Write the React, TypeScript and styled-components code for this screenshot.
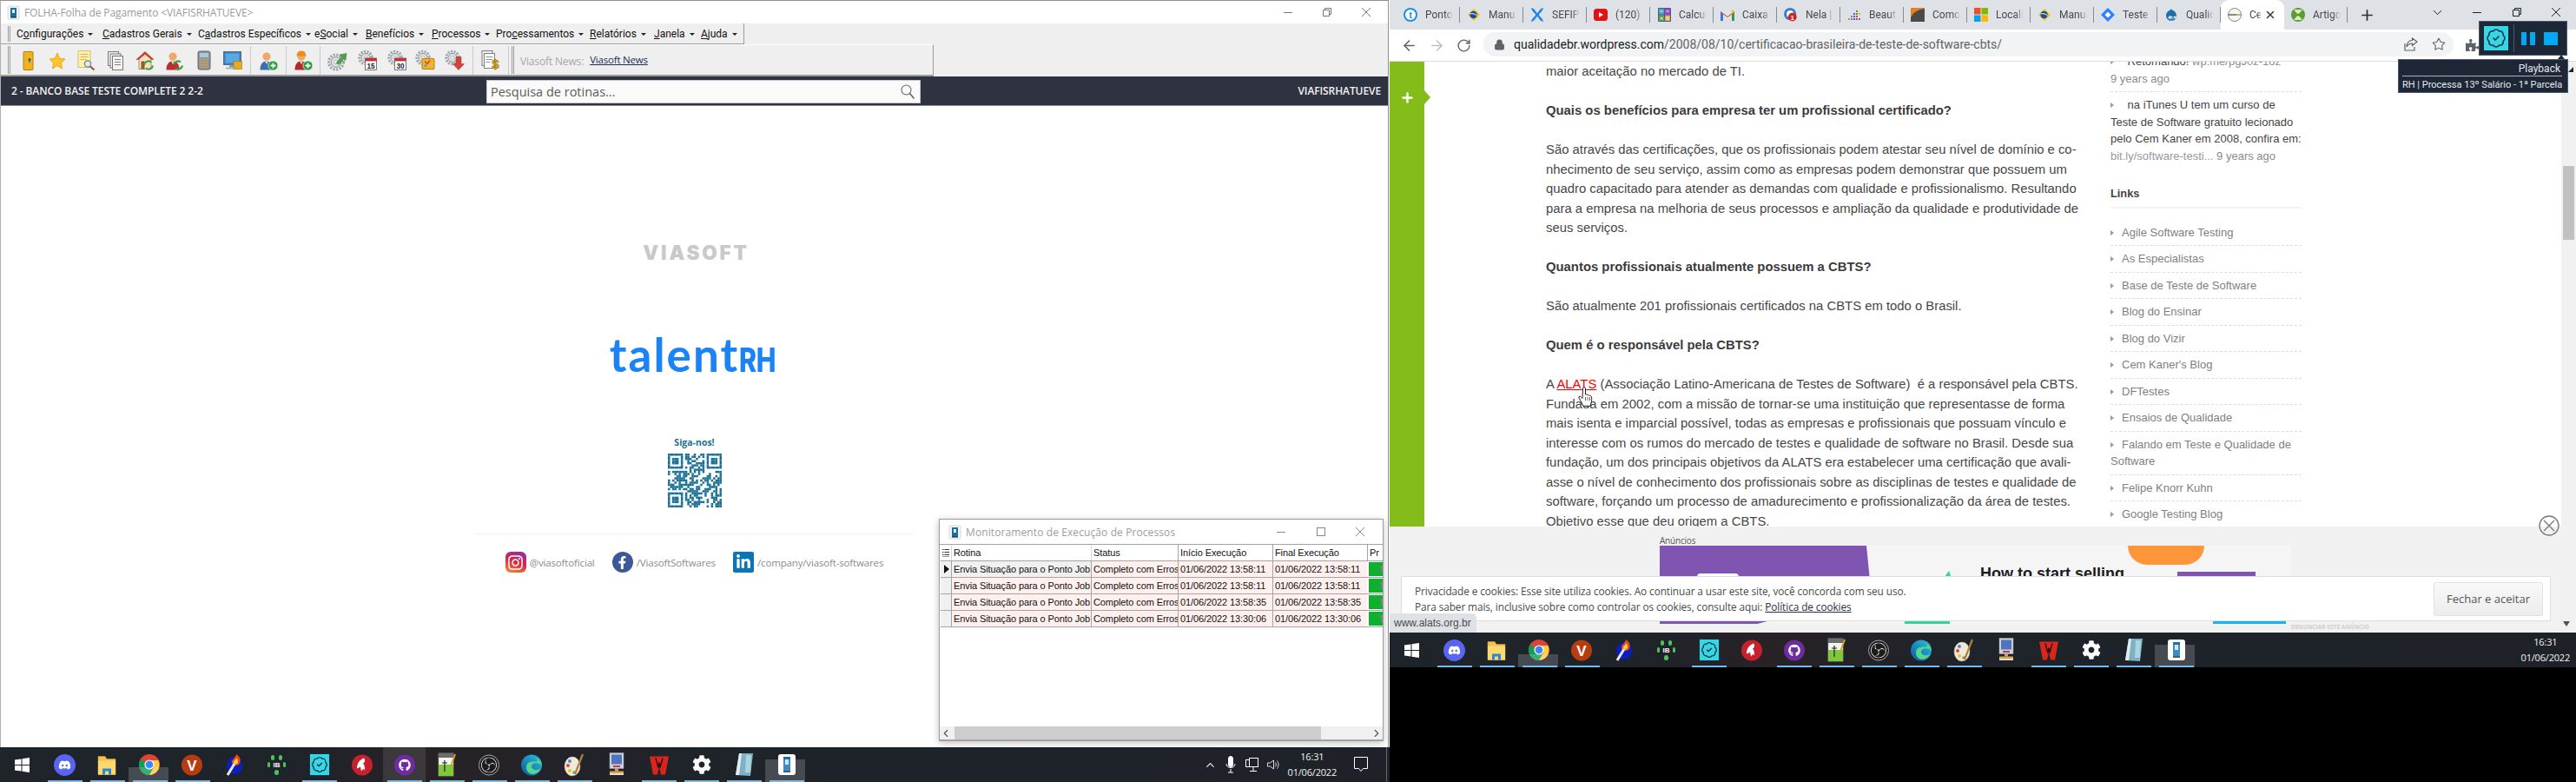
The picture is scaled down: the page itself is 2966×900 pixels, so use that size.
import React from "react";
import styled, { createGlobalStyle } from "styled-components";
import { ArrowLeft, ArrowRight, RotateCw, Lock, Star, ChevronDown, ChevronUp, ChevronLeft, ChevronRight, Plus, X, BadgeCheck } from "lucide-react";
import { FaDiscord, FaGithub, FaCog, FaPuzzlePiece, FaFacebookF, FaLinkedinIn, FaInstagram, FaDrupal } from "react-icons/fa";
import { SiObsstudio } from "react-icons/si";

const Global = createGlobalStyle`
  html, body { margin: 0; padding: 0; background: #000; }
  * { box-sizing: border-box; }
  #root { width: 2966px; height: 900px; }
`;

const UI = `"Open Sans", "Noto Sans", sans-serif`;
const NARROW = `Roboto, "Liberation Sans", sans-serif`;
const ARIAL = `"Liberation Sans", Arial, sans-serif`;

const Root = styled.div`
  position: relative; display: flex; width: 2966px; height: 900px; overflow: hidden; background: #000;
`;
const LeftDesktop = styled.div`
  position: relative; flex: 0 0 1600px; height: 900px; display: flex; flex-direction: column; background: #fff;
`;
const RightDesktop = styled.div`
  flex: 0 0 1366px; height: 900px; display: flex; flex-direction: column; background: #000;
`;

/* ---------- desktop app window ---------- */
const AppFrame = styled.div`
  flex: 1; min-height: 0; display: flex; flex-direction: column; margin-right: 1px;
  border-top: 1px solid #8e8e8e; border-left: 1px solid #b0b0b0; border-right: 1px solid #8e8e8e;
`;
const TitleBar = styled.div`
  flex: 0 0 26px; display: flex; align-items: center; background: #fff; padding-left: 7px;
`;
const TitleText = styled.span`
  font: 12px ${UI}; color: #9b9b9b; margin-left: 5px; letter-spacing: -0.1px;
`;
const CaptionButtons = styled.div`
  margin-left: auto; display: flex; margin-right: 3px;
`;
const CaptionBtn = styled.span`
  width: 45px; height: 26px; display: flex; align-items: center; justify-content: center;
`;
const MenuStrip = styled.div`
  flex: 0 0 24px; background: #efefef; display: flex;
`;
const MenuBand = styled.div`
  width: 856px; display: flex; align-items: center; border-right: 1px solid #9c9c9c; border-bottom: 1px solid #9c9c9c;
  padding-left: 8px;
`;
const Grip = styled.i`
  display: block; width: 3px; height: ${p => p.$h}px; border-left: 1px solid #9a9a9a; border-right: 1px solid #9a9a9a; margin-right: ${p => p.$m}px; flex: none;
`;
const MenuItem = styled.span`
  flex: 0 0 ${p => p.$w}px; font: 12px ${NARROW}; color: #111; white-space: nowrap;
  &::after { content: ""; display: inline-block; margin-left: 5px; vertical-align: 2px; border: 3px solid transparent; border-top: 3.5px solid #222; border-bottom: 0; }
`;
const ToolStrip = styled.div`
  flex: 0 0 37px; background: #efefef; display: flex;
`;
const ToolBand = styled.div`
  width: 1074px; display: flex; align-items: center; padding-left: 8px;
  border-top: 1px solid #fff; border-right: 1px solid #9c9c9c; border-bottom: 2px solid #9c9c9c;
`;
const ToolBtn = styled.span`
  flex: 0 0 ${p => p.$w || 33.8}px; display: flex; align-items: center; justify-content: center;
`;
const ToolSep = styled.i`
  display: block; flex: none; width: 1px; height: 33px; background: #c9c9c9; margin: 0 3px;
`;
const NewsLabel = styled.span`
  font: 12px ${UI}; color: #a7a7a7; margin-left: 7px; letter-spacing: -0.15px; margin-top: 2px;
`;
const NewsLink = styled.span`
  font: 11.5px ${UI}; color: #1b2a55; margin-left: 7px; text-decoration: underline; letter-spacing: -0.2px; margin-top: -1px;
`;
const DarkBar = styled.div`
  flex: 0 0 34px; background: #2f3240; display: flex; align-items: center; position: relative; padding: 0 8px 0 12px;
  justify-content: space-between; border-bottom: 1px solid #8e8e8e;
`;
const DarkLabel = styled.span`
  font: 600 12px ${UI}; color: #f2f2f2; letter-spacing: -0.1px;
`;
const SearchField = styled.div`
  position: absolute; left: 559px; top: 4px; width: 500px; height: 27px; background: #fafafa; border: 1px solid #c8c8c8;
  display: flex; align-items: center; justify-content: space-between; padding: 0 6px 0 4px;
  font: 14.5px ${UI}; color: #5b5b5b;
`;
const AppMain = styled.div`
  flex: 1; min-height: 0; display: flex; flex-direction: column; align-items: center; padding-top: 161px; background: #fff;
`;
const ViasoftMark = styled.div`
  font: 900 22.5px/16px Inter, sans-serif; color: #c9c9c9; letter-spacing: 2.8px; height: 16px; margin-left: 4px;
`;
const TalentMark = styled.div`
  margin-top: 87px; display: flex; align-items: baseline; color: #1a83f5; height: 44px; line-height: 44px; white-space: nowrap;
`;
const TalentWord = styled.span`
  font: 700 53px/44px Lato, sans-serif; letter-spacing: 2px;
`;
const TalentRh = styled.span`
  font: 800 38px/44px Inter, sans-serif; letter-spacing: -0.5px; transform: scaleX(0.8); transform-origin: left; width: 46px;
`;
const FollowLabel = styled.div`
  margin-top: 72px; font: 700 10.5px/14px "Open Sans", sans-serif; color: #1a6f94;
`;
const QrBox = styled.div`
  margin-top: 6px; width: 62px; height: 62px;
`;
const Divider = styled.div`
  margin: 30px 0 0 0; width: 505px; height: 1px; background: #f0f0f0;
`;
const SocialRow = styled.div`
  margin-top: 20px; display: flex; align-items: center;
`;
const SocialItem = styled.span`
  display: flex; align-items: center; gap: 4px; margin-right: ${p => p.$m}px; font: 11.5px ${UI}; color: #8b8b8b; letter-spacing: -0.15px;
`;
const InstaTile = styled.span`
  width: 24px; height: 24px; border-radius: 6px; display: flex; align-items: center; justify-content: center; color: #fff;
  background: linear-gradient(20deg, #f09433, #dc2743 50%, #8a2bb8);
  font-size: 19px;
`;
const FbTile = styled.span`
  width: 24px; height: 24px; border-radius: 50%; background: #3b5998; color: #fff; display: flex; align-items: center; justify-content: center; font-size: 15px;
`;
const LiTile = styled.span`
  width: 24px; height: 24px; border-radius: 2px; background: #0a76b4; color: #fff; display: flex; align-items: center; justify-content: center; font-size: 18px;
`;

/* ---------- floating monitor window ---------- */
const MonitorWindow = styled.div`
  position: absolute; left: 1081px; top: 597px; width: 512px; height: 256px; background: #fff;
  border: 1px solid #9d9d9d; box-shadow: 0 2px 8px rgba(0,0,0,.25);
  display: flex; flex-direction: column; overflow: hidden;
`;
const MonitorTitle = styled.div`
  flex: 0 0 29px; display: flex; align-items: center; padding-left: 10px; border-bottom: 1px solid #a3a3a3;
`;
const MonitorTitleText = styled.span`
  font: 12px ${UI}; color: #9d9d9d; margin-left: 5px; letter-spacing: 0.1px;
`;
const MonitorCaption = styled.span`
  width: 45.5px; height: 28px; display: flex; align-items: center; justify-content: center;
`;
const GridArea = styled.div`
  flex: 1; min-height: 0; margin-left: 1px; overflow: hidden; display: flex; flex-direction: column;
`;
const GridRow = styled.div`
  flex: 0 0 ${p => p.$h}px; display: grid; grid-template-columns: 12px 161px 100px 109px 109px 18px;
  border-bottom: 1px solid #a5a5a5;
`;
const GridCell = styled.span`
  font: 11px/18px ${ARIAL}; color: #111; padding-left: 2px; overflow: hidden; white-space: nowrap; letter-spacing: -0.1px;
  background: ${p => p.$bg}; border-left: 1px solid ${p => (p.$soft ? "#d8d8d8" : "#a5a5a5")};
`;
const GridIndicator = styled.span`
  display: flex; align-items: center; justify-content: center; background: ${p => p.$bg};
`;
const PrCell = styled.span`
  margin: 1px 0 1px 2px; background: #0fb02d; color: #e64bd0; font: 11.5px/15px ${UI}; padding-left: 11px; overflow: hidden;
`;
const HScroll = styled.div`
  flex: 0 0 16px; display: flex; align-items: center; background: #f0f0f0; border-bottom: 1px solid #a8a8b0; color: #555;
`;
const HThumb = styled.div`
  flex: 0 0 422px; height: 15px; background: #cdcdcd; margin: 0 auto 0 3px;
`;

/* ---------- taskbar ---------- */
const TaskbarWrap = styled.div`
  flex: 0 0 40px; height: 40px; display: flex; align-items: stretch;
  background: linear-gradient(90deg, #1f232a 0%, #1f232a 20%, #272226 32%, #1f232a 48%, #1e2228 100%);
`;
const StartCell = styled.span`
  flex: 0 0 50px; display: flex; align-items: center; justify-content: center;
`;
const TaskCell = styled.span`
  position: relative; flex: 0 0 48.9px; display: flex; align-items: center; justify-content: center;
  ${p => p.$full && `background: rgba(255,255,255,.1);`}
  ${p => p.$run && `
    &::after { content: ""; position: absolute; left: 5px; right: 4px; bottom: 0; height: 2px; background: #76b9ed; }
  `}
  ${p => p.$ghost && `
    &::before { content: ""; position: absolute; left: 0; right: 3px; bottom: 0; height: ${p.$ghost}px; background: rgba(255,255,255,.18); }
  `}
`;
const Tray = styled.div`
  margin-left: auto; display: flex; align-items: center; gap: ${p => p.$gap}px; color: #fff; padding-right: ${p => p.$pr}px;
`;
const Clock = styled.div`
  font: 11px/18px ${UI}; color: #f2f2f2; text-align: center; letter-spacing: -0.2px;
`;
const NotifySlot = styled.span`
  display: flex; margin-left: 11px;
`;
const DesktopEdge = styled.i`
  display: block; width: 1px; height: 40px; background: #666; margin-left: 12px; margin-right: 3px;
`;

/* ---------- chrome ---------- */
const ChromeWindow = styled.div`
  flex: 0 0 728px; height: 728px; display: flex; flex-direction: column; background: #fff; position: relative;
`;
const TabStrip = styled.div`
  flex: 0 0 34px; background: #dee1e6; display: flex; align-items: stretch; padding-left: 8px;
`;
const Tab = styled.div`
  position: relative; flex: 0 0 73px; display: flex; align-items: center; padding-left: 8px; overflow: hidden;
  ${p => p.$active
    ? `background: #fff; border-radius: 9px 9px 0 0;`
    : p.$sep ? `&::after { content: ""; position: absolute; right: 0; top: 8px; bottom: 8px; width: 1px; background: #878a8e; }` : ``}
`;
const Favicon = styled.span`
  flex: 0 0 16px; width: 16px; height: 16px; display: flex; align-items: center; justify-content: center;
`;
const TabTitle = styled.span`
  margin-left: 9px; width: ${p => p.$w}px; font: 12px Roboto, sans-serif; color: #45484d; white-space: nowrap; overflow: hidden;
  -webkit-mask-image: linear-gradient(90deg, #000 72%, transparent 100%);
  mask-image: linear-gradient(90deg, #000 72%, transparent 100%);
`;
const TabClose = styled.span`
  display: flex; color: #3c3f44; margin-left: 3px;
`;
const NewTab = styled.span`
  display: flex; align-items: center; justify-content: center; width: 44px; color: #2f3135;
`;
const ChromeCaption = styled.div`
  margin-left: auto; display: flex; align-items: flex-start; color: #222;
`;
const ChromeCapBtn = styled.span`
  width: 45.5px; height: 28px; display: flex; align-items: center; justify-content: center;
`;
const ChromeToolbar = styled.div`
  flex: 0 0 37px; display: flex; align-items: center; background: #fff; border-bottom: 1px solid #dcdcdc; padding-left: 12px; gap: 0;
`;
const NavBtn = styled.span`
  flex: 0 0 32px; display: flex; color: ${p => p.$c}; padding-left: 1px;
`;
const Omnibox = styled.div`
  width: 1117px; height: 28px; border-radius: 14px; background: #f1f3f4; display: flex; align-items: center; padding-left: 12px; margin-bottom: 2px;
`;
const UrlText = styled.span`
  margin-left: 10px; font: 14px Roboto, sans-serif; color: #5f6368;
`;
const UrlHost = styled.span`
  color: #202124;
`;
const OmniRight = styled.div`
  margin-left: auto; display: flex; align-items: center; gap: 16px; padding-right: 9px; color: #5f6368;
`;
const PuzzleSlot = styled.span`
  margin-left: 14px; display: flex; color: #5f6368;
`;
const Viewport = styled.div`
  flex: 1; min-height: 0; position: relative; display: flex; flex-direction: column; overflow: hidden;
`;
const PageBody = styled.div`
  flex: 0 0 535px; height: 535px; display: flex; overflow: hidden; background: #fff;
`;
const GreenRail = styled.div`
  position: relative; flex: 0 0 40px; background: #84bd19; display: block; color: #fff;
`;
const RailTab = styled.span`
  position: absolute; left: 0; top: 33px; width: 47px; height: 17px; display: flex; align-items: center; padding-left: 12px;
  &::after { content: ""; position: absolute; left: 40px; top: 0; border-left: 7px solid #84bd19; border-top: 8.5px solid transparent; border-bottom: 8.5px solid transparent; }
`;
const Article = styled.article`
  flex: 0 0 650px; margin-left: 140px; font: 14.85px/22.5px ${ARIAL}; color: #474747; white-space: nowrap;
`;
const Para = styled.p`
  margin: 0 0 22.5px;
  a { color: #f00; text-decoration: underline; }
`;
const Heading = styled.p`
  margin: 0 0 22.5px; font-weight: 700; color: #3b3b3b;
`;
const Side = styled.aside`
  flex: 0 0 220px; margin-top: -10px; font: 13px/19.5px ${ARIAL}; color: #444; letter-spacing: 0;
`;
const SideTweet = styled.div`
  padding: 0 0 5px; border-bottom: 1px dashed #ddd;
  & + & { padding-top: 5px; border-bottom: 0; }
`;
const Bullet = styled.i`
  display: inline-block; width: 0; height: 0; vertical-align: 1px; margin-right: ${p => p.$m}px;
  border-left: 4px solid #999; border-top: 3.5px solid transparent; border-bottom: 3.5px solid transparent;
`;
const Muted = styled.span`
  color: ${p => p.$c || "#8c8c8c"};
`;
const SideHeading = styled.div`
  margin-top: 19px; padding-bottom: 5px; font-weight: 700; font-size: 12.8px; color: #444; border-bottom: 2px solid #f3f3f3;
`;
const LinkList = styled.ul`
  list-style: none; margin: 13px 0 0; padding: 0; color: #7f7f7f;
`;
const LinkItem = styled.li`
  padding: 5px 0; border-bottom: 1px dashed #ddd; white-space: pre;
`;
const ScrollTrack = styled.div`
  margin-left: auto; flex: 0 0 17px; background: #f1f1f1; padding-top: 120px;
`;
const ScrollThumb = styled.div`
  width: 13px; height: 85px; margin-left: 2px; background: #c1c1c1;
`;
const AdFooter = styled.div`
  flex: 1; min-height: 0; position: relative; background: #f1f1f1; padding: 10px 0 0 311px;
`;
const AdLabel = styled.div`
  font: 10px/12px ${UI}; color: #555; letter-spacing: -0.2px;
`;
const AdBox = styled.div`
  position: relative; width: 727px; height: 90px; background: #f5f5f5; overflow: hidden;
`;
const AdPurple = styled.i`
  position: absolute; left: ${p => p.$l}px; top: ${p => p.$t}px; width: ${p => p.$w}px; height: ${p => p.$h}px; background: ${p => p.$c};
  ${p => p.$r && `border-radius: ${p.$r};`}
  ${p => p.$clip && `clip-path: ${p.$clip};`}
`;
const AdHeadline = styled.div`
  position: absolute; left: 369px; top: 21px; font: 700 18px/22px ${ARIAL}; color: #1c1c1c;
`;
const AdReport = styled.div`
  position: absolute; left: 1038px; top: 111px; width: 90px; font: 700 6.6px/10px ${UI}; color: #cfcfcf; white-space: nowrap;
`;
const DownTri = styled.i`
  position: absolute; right: 7px; top: 109px; border: 4px solid transparent; border-top: 6px solid #505050; border-bottom: 0;
`;
const CookieBar = styled.div`
  position: absolute; left: 13px; top: 592px; width: 1324px; height: 52px; background: #fff; border: 1px solid #dedede;
  display: flex; align-items: center; justify-content: space-between; padding: 0 8px 0 15px;
`;
const CookieText = styled.div`
  font: 11.8px/18px ${UI}; color: #4a4a4a; letter-spacing: -0.08px;
  a { color: #2a2f45; text-decoration: underline; }
`;
const CookieBtn = styled.span`
  width: 126px; height: 39px; display: flex; align-items: center; justify-content: center; background: linear-gradient(#f9f9f9, #ececec);
  border: 1px solid #e2e2e2; font: 13px ${UI}; color: #555; border-radius: 2px;
`;
const StatusBubble = styled.div`
  position: absolute; left: 0; bottom: 0; width: 100px; height: 22px; padding-left: 5px; background: #dee1e6; border-top-right-radius: 5px;
  font: 12px/22px ${ARIAL}; color: #4a4a4a;
`;
const CloseCircle = styled.span`
  position: absolute; left: 1323px; top: 522px; display: flex;
`;
const HandCursor = styled.span`
  position: absolute; left: 217px; top: 374px; display: flex;
`;

/* ---------- playback overlay ---------- */
const PlaybackBar = styled.div`
  position: absolute; left: 2854px; top: 24px; width: 102px; height: 40px; background: #1e2736; border: 1px solid #4b5a72;
  display: flex; align-items: center; padding-left: 5px;
`;
const BadgeTile = styled.span`
  flex: 0 0 28px; height: 28px; background: #36d6e4; color: #14303c; display: flex; align-items: center; justify-content: center;
`;
const BarDivider = styled.i`
  flex: none; width: 1px; height: 32px; background: #4b5a72; margin: 0 8px 0 6px;
`;
const PauseIcon = styled.span`
  flex: none; width: 16px; height: 15px; display: flex; justify-content: space-between;
  &::before, &::after { content: ""; width: 6px; background: #00a8f5; }
`;
const StopIcon = styled.i`
  flex: none; width: 16px; height: 15px; background: #00a8f5; margin-left: 10px;
`;
const PlaybackTip = styled.div`
  position: absolute; left: 2761px; top: 68px; width: 196px; height: 39px; background: #1e2736; border: 1px solid #4b5a72; color: #e4e9ef;
  font: 11px/17px ${NARROW}; text-align: right; padding: 2px 6px 0 4px; white-space: nowrap;
  &::before { content: ""; position: absolute; right: 3px; top: -6px; border: 4px solid transparent; border-bottom: 5px solid #1e2736; border-top: 0; }
`;
const TipTitle = styled.div`
  border-bottom: 1px solid #aab2bc; padding-right: 2px; height: 17px; margin-bottom: 1px; font-size: 12px;
`;
const MouseTip = styled.i`
  position: absolute; left: 2957px; top: 77px; border-bottom: 6px solid #222; border-left: 6px solid transparent;
`;

/* ---------- drawings ---------- */
const Cap = ({ kind, c = "#777", s = 1 }: { kind: string; c?: string; s?: number }) => (
  <svg width="12" height="12" viewBox="0 0 12 12" fill="none" stroke={c} strokeWidth={s}>
    {kind === "min" && <path d="M1 6.5h10" />}
    {kind === "max" && <rect x="1.5" y="1.5" width="9" height="9" />}
    {kind === "res" && <path d="M1.5 3.5h7v7h-7zM3.5 3.5v-2h7v7h-2" />}
    {kind === "close" && <path d="M1 1l10 10M11 1L1 11" />}
  </svg>
);

const AppGlyph = () => (
  <svg width="15" height="17" viewBox="0 0 15 17">
    <rect x="1" y="1" width="13" height="15" rx="1" fill="#f4f4f4" stroke="#d8d8d8" />
    <rect x="4" y="3" width="7" height="10" fill="#1a6ea8" />
    <rect x="6" y="5" width="3" height="4" fill="#dff" />
    <rect x="4" y="13" width="7" height="1.6" fill="#14466e" />
  </svg>
);

const ToolGear = ({ x, y, r }: { x: number; y: number; r: number }) => (
  <g>
    <circle cx={x} cy={y} r={r * 1.05} fill="none" stroke="#a0a6aa" strokeWidth={r * 0.42} strokeDasharray="2.2 1.4" />
    <circle cx={x} cy={y} r={r * 0.72} fill="#dfe2e4" stroke="#7f858a" strokeWidth="0.9" />
    <circle cx={x} cy={y} r={r * 0.28} fill="#fff" stroke="#8a9095" strokeWidth="0.6" />
  </g>
);
const Person = ({ body, head = "#f0a868" }: { body: string; head?: string }) => (
  <g>
    <circle cx="10" cy="7.5" r="4.6" fill={head} />
    <path d="M2.5 23c0-7 3-10 7.5-10s7.5 3 7.5 10z" fill={body} />
    <path d="M8.5 13.5l1.5 3 1.5-3z" fill="#f4f4f4" />
  </g>
);
const GreenPlus = () => (
  <g>
    <circle cx="17.5" cy="18" r="5.5" fill="#2e9a3e" stroke="#eaf5ea" strokeWidth="0.8" />
    <path d="M17.5 15v6M14.5 18h6" stroke="#fff" strokeWidth="1.8" />
  </g>
);
const Sync = () => (
  <g fill="none" stroke="#3da33f" strokeWidth="2.2">
    <path d="M11 17a5 5 0 0 1 8-3" />
    <path d="M21 18a5 5 0 0 1-8 3" />
  </g>
);
const CalPad = ({ n }: { n: string }) => (
  <g>
    <rect x="9.5" y="9.5" width="13" height="13.5" fill="#fff" stroke="#555" strokeWidth="0.8" />
    <rect x="9.5" y="9.5" width="13" height="3.4" fill="#c9302c" />
    <text x="16" y="21.5" fontSize="8.2" fontWeight="700" fontFamily="Liberation Sans" textAnchor="middle" fill="#222">{n}</text>
  </g>
);

const toolDrawings: Record<string, React.ReactNode> = {
  door: <g><rect x="7" y="2" width="11" height="21" rx="1" fill="#f1b21d" stroke="#b67a10" /><circle cx="14" cy="11" r="1.5" fill="#245a9c" /><rect x="13.4" y="11" width="1.2" height="3.5" fill="#245a9c" /></g>,
  star: <polygon points="12,3.5 14.8,9.8 21,10.5 16.4,15 17.6,21.5 12,18.2 6.4,21.5 7.6,15 3,10.5 9.2,9.8" fill="#ffc42a" stroke="#e39a12" strokeWidth="0.8" />,
  search: <g><rect x="3" y="1" width="14" height="19" fill="#fdf1ad" stroke="#d7c26a" /><path d="M5.5 5h9M5.5 8h9M5.5 11h7" stroke="#cdb65d" /><circle cx="14" cy="16" r="3.6" fill="#dfeaf2" stroke="#707a82" strokeWidth="1.2" /><path d="M17 19l4.5 4" stroke="#7b5a2c" strokeWidth="2" /></g>,
  docs: <g fill="#f2f2f2" stroke="#777"><rect x="3.5" y="2" width="12" height="16" /><rect x="6" y="4.5" width="12" height="16" /><rect x="8.5" y="7" width="12" height="16" /><path d="M11 11h7M11 14h7M11 17h7" strokeWidth="0.9" /></g>,
  house: <g><path d="M12 2L2 11h3v11h14V11h3z" fill="#f4e0bc" stroke="#8c6a3a" strokeWidth="0.7" /><path d="M12 2L2 11h3l7-6 7 6h3z" fill="#c93a30" /><rect x="7.5" y="13" width="4" height="9" fill="#8a5c30" /><Sync /></g>,
  personSync: <g><Person body="#bb2f2f" /><Sync /></g>,
  calc: <g><rect x="5" y="1.5" width="14" height="21" rx="2" fill="#8d969c" stroke="#5e666c" /><rect x="7" y="3.5" width="10" height="5" fill="#a7c8dc" /><path d="M7.5 11h2.2M11 11h2.2M14.3 11h2.2M7.5 14h2.2M11 14h2.2M14.3 14h2.2M7.5 17h2.2M11 17h2.2M14.3 17h2.2M7.5 20h2.2M11 20h2.2M14.3 20h2.2" stroke="#e7a33a" strokeWidth="1.7" /></g>,
  monitor: <g><rect x="1.5" y="2" width="20" height="15" fill="#3a7fc2" stroke="#5d6a78" /><rect x="3.5" y="4" width="16" height="11" fill="#5aa8e2" /><rect x="8" y="17" width="7" height="3" fill="#8d98a3" /><rect x="4" y="20" width="15" height="2" fill="#aab3bb" /><rect x="13" y="13" width="9.5" height="9" fill="#e8a922" stroke="#a4730f" strokeWidth="0.6" /></g>,
  personAdd: <g><Person body="#3a6fb0" /><GreenPlus /></g>,
  worker: <g><Person body="#b02c2c" /><path d="M4.5 7c0-4 2.5-6 5.5-6s5.5 2 5.5 6z" fill="#ee8a1f" /><GreenPlus /></g>,
  gearArrow: <g><ToolGear x={10} y={14} r={8} /><path d="M10 15l6-7-2-2.5 8-1.5-1 8-2.2-1.8-5.5 6.5z" fill="#4ea24a" stroke="#2c7a2c" strokeWidth="0.5" /></g>,
  gear15: <g><ToolGear x={10} y={9} r={7} /><CalPad n="15" /></g>,
  gear30: <g><ToolGear x={10} y={9} r={7} /><CalPad n="30" /></g>,
  gearBag: <g><ToolGear x={9} y={9} r={7} /><rect x="8" y="10" width="14" height="12" rx="1" fill="#f0b52c" stroke="#b67a10" /><path d="M11 13l3 3 3-4" stroke="#d23a3a" strokeWidth="1.4" fill="none" /><circle cx="12" cy="18" r="1.5" fill="#4aa0d8" /></g>,
  gearDown: <g><ToolGear x={9} y={9} r={7} /><path d="M13 8h6v8h3.5l-6.5 7-6.5-7H13z" fill="#d8413a" stroke="#9c2622" strokeWidth="0.5" /></g>,
  docMoney: <g><rect x="2" y="1" width="12" height="17" fill="#f0f0f0" stroke="#808080" /><rect x="4.5" y="4" width="12" height="17" fill="#fafafa" stroke="#808080" /><path d="M6.5 8h8M6.5 11h8M6.5 14h5" stroke="#999" /><text x="17.5" y="21" fontSize="15" fontWeight="700" fontFamily="Liberation Sans" textAnchor="middle" fill="#e0a80e" stroke="#8d6a08" strokeWidth="0.5">$</text></g>,
};
const ToolIcon = ({ name }: { name: string }) => (
  <svg width="24" height="25" viewBox="0 0 24 24">{toolDrawings[name]}</svg>
);

const ChromeBall = ({ size = 24 }: { size?: number }) => (
  <svg width={size} height={size} viewBox="0 0 24 24">
    <circle cx="12" cy="12" r="12" fill="#db4437" />
    <path d="M12 12L1.6 6A12 12 0 0 0 12 24l5.2-9z" fill="#0f9d58" />
    <path d="M12 7h10.4A12 12 0 0 1 12 24l5-9z" fill="#ffcd40" />
    <circle cx="12" cy="12" r="5.6" fill="#fff" />
    <circle cx="12" cy="12" r="4.4" fill="#4285f4" />
  </svg>
);

const BadgeGear = ({ size = 24, c = "#173344" }: { size?: number; c?: string }) => <BadgeCheck size={size} color={c} strokeWidth={1.6} />;

const taskIcons: Record<string, React.ReactNode> = {
  discord: <svg width="25" height="25" viewBox="0 0 24 24"><circle cx="12" cy="12" r="12" fill="#5865f2" /><g transform="translate(5 5) scale(0.583)"><FaDiscord size={24} color="#fff" /></g></svg>,
  folder: <svg width="24" height="25" viewBox="0 0 24 24"><path d="M2 2h8l2 3h10v18H2z" fill="#f3c24a" stroke="#cc9a2c" strokeWidth="0.6" /><rect x="2" y="7" width="20" height="16" fill="#fbd872" /><path d="M7 23v-7h10v7" fill="#2d88cf" /><rect x="10" y="19" width="4" height="4" fill="#fbd872" /></svg>,
  chrome: <ChromeBall size={24} />,
  vivaldi: <svg width="24" height="25" viewBox="0 0 24 24"><circle cx="12" cy="12" r="12" fill="#b83c12" /><text x="12" y="18" fontSize="17" fontWeight="700" fontFamily="Liberation Sans" textAnchor="middle" fill="#fff">V</text></svg>,
  torch: <svg width="24" height="28" viewBox="0 0 24 28"><ellipse cx="12" cy="15" rx="9" ry="10" fill="#0b1fc0" /><path d="M14 2c5 3 6 8 3 12-3 2-7 1-8-2-1-4 4-5 5-10z" fill="#e6491e" /><path d="M14 6c2 2 3 5 1 7-2 1-4 0-4-2 0-2 3-2 3-5z" fill="#ffd336" /><path d="M12 13L4 26" stroke="#e9e9e9" strokeWidth="3" /></svg>,
  dots: <svg width="24" height="26" viewBox="0 0 24 26"><g fill="#4bc45a"><rect x="5" y="2" width="4" height="6" rx="2" /><rect x="14" y="2" width="4" height="6" rx="2" /><rect x="9" y="19" width="5" height="6" rx="2.5" /><rect x="1" y="10" width="3" height="6" rx="1.5" /><rect x="19" y="10" width="3" height="6" rx="1.5" /></g><text x="11.5" y="16" fontSize="8" fontWeight="700" fontFamily="Liberation Sans" textAnchor="middle" fill="#fff">IB</text></svg>,
  wing: <svg width="24" height="25" viewBox="0 0 24 24"><circle cx="12" cy="12" r="12" fill="#c5222e" /><path d="M14 4c-5 2-8 6-8 12 2-1 3-1 4-2l1 5c1-1 2-2 2-3l2 2c0-3 0-6-2-8 2-1 3-3 1-6z" fill="#fff" /></svg>,
  github: <svg width="24" height="25" viewBox="0 0 24 24"><circle cx="12" cy="12" r="12" fill="#6e2c9e" /><g transform="translate(5 5) scale(0.583)"><FaGithub size={24} color="#fff" /></g></svg>,
  note: <svg width="24" height="28" viewBox="0 0 24 28"><rect x="3" y="1" width="17" height="26" fill="#f5f5f0" stroke="#aaa" strokeWidth="0.6" /><rect x="3" y="1" width="17" height="5" fill="#6c6c6c" /><rect x="3" y="14" width="17" height="13" fill="#7ec83a" /><path d="M10 9v13M13 12h-6" stroke="#222" strokeWidth="1.2" /><path d="M22 2l-5 14" stroke="#d8a324" strokeWidth="2" /></svg>,
  obs: <svg width="24" height="25" viewBox="0 0 24 24"><circle cx="12" cy="12" r="11.5" fill="#1c1c1c" stroke="#aaa" /><g transform="translate(3 3) scale(0.75)"><SiObsstudio size={24} color="#ececec" /></g></svg>,
  edge: <svg width="24" height="25" viewBox="0 0 24 24"><defs><linearGradient id="edgeG" x1="0" y1="1" x2="1" y2="0"><stop offset="0" stopColor="#0c59a4" /><stop offset="1" stopColor="#2cc0d8" /></linearGradient></defs><circle cx="12" cy="12" r="12" fill="url(#edgeG)" /><path d="M23 15c-2 3-7 4-10 1-2-2-1-5 2-6 3-1 8 0 9 3-1-7-8-12-15-10 6-1 10 1 10 4 0 2-6 0-10 2C5 11 5 18 9 21c4 3 11 1 14-6z" fill="#58d68e" /></svg>,
  palette: <svg width="24" height="27" viewBox="0 0 24 27"><ellipse cx="10" cy="15" rx="9" ry="11" fill="#f0e8d8" stroke="#b8b0a0" strokeWidth="0.5" /><circle cx="7" cy="9" r="2" fill="#3a8fd8" /><circle cx="5" cy="14" r="2" fill="#e8483a" /><circle cx="7" cy="20" r="2" fill="#f2c12e" /><circle cx="12" cy="22" r="1.7" fill="#50b050" /><path d="M22 1l-9 23" stroke="#b08040" strokeWidth="2.2" /></svg>,
  pc: <svg width="24" height="28" viewBox="0 0 24 28"><rect x="4" y="0.5" width="16" height="18" fill="#cfd3d8" stroke="#9aa0a6" strokeWidth="0.5" /><rect x="6" y="2.5" width="12" height="11" fill="#4e74c0" /><rect x="8" y="15" width="8" height="2" fill="#c04040" /><rect x="10" y="18.5" width="4" height="3" fill="#aaa" /><rect x="4" y="21.5" width="16" height="2.5" fill="#e8a636" /><rect x="4" y="24" width="16" height="2" fill="#ddd" /></svg>,
  wps: <svg width="24" height="25" viewBox="0 0 24 24"><path d="M1 2h22l-4 21h-5l-2-9-2 9H5z" fill="#d8261c" /><path d="M8 4l3 11 1-6 1 6 3-11" fill="none" stroke="#2a0e0e" strokeWidth="1.4" /></svg>,
  gear: <FaCog size={22} color="#fff" />,
  pad: <svg width="24" height="28" viewBox="0 0 24 28"><path d="M6 1h16l-3 26-17-1z" fill="#7eb2c2" /><path d="M6 1l-4 25 4 0 3-25z" fill="#e4eef2" /><path d="M14 3h6l-1 20h-6z" fill="#a9d4e0" /></svg>,
  app: <svg width="22" height="26" viewBox="0 0 22 26"><rect x="1" y="1" width="20" height="24" rx="3" fill="#fff" /><rect x="7" y="4" width="8" height="16" fill="#1c6fb0" /><rect x="9" y="7" width="4" height="6" fill="#bde4f6" /><rect x="7" y="20" width="8" height="2" fill="#103e68" /></svg>,
};

const StartIcon = () => (
  <svg width="17" height="17" viewBox="0 0 17 17" fill="#fff">
    <polygon points="0,2.5 7.5,1.4 7.5,8 0,8" />
    <polygon points="8.5,1.2 17,0 17,8 8.5,8" />
    <polygon points="0,9 7.5,9 7.5,15.6 0,14.5" />
    <polygon points="8.5,9 17,9 17,17 8.5,15.8" />
  </svg>
);

const taskOrder = ["discord", "folder", "chrome", "vivaldi", "torch", "dots", "badge", "wing", "github", "note", "obs", "edge", "palette", "pc", "wps", "gear", "pad", "app"];
const running = new Set(["discord", "folder", "chrome", "vivaldi", "badge", "github", "note", "obs", "edge", "palette", "wps", "gear", "pad", "app"]);

const BadgeTileSmall = styled.span`
  width: 24px; height: 26px; background: #36d6e4; border: 1px solid #14303c; display: flex; align-items: center; justify-content: center;
`;
const BadgeTaskIcon = () => (
  <BadgeTileSmall><BadgeGear size={20} /></BadgeTileSmall>
);

const Taskbar = ({ activeFull, appGhost, chromeGhost, children }: { activeFull: boolean; appGhost: number; chromeGhost: number; children: React.ReactNode }) => (
  <TaskbarWrap>
    <StartCell><StartIcon /></StartCell>
    {taskOrder.map(k => (
      <TaskCell
        key={k}
        $run={running.has(k)}
        $full={activeFull && k === "github"}
        $ghost={k === "app" ? appGhost : k === "chrome" ? chromeGhost : 0}
      >
        {k === "badge" ? <BadgeTaskIcon /> : taskIcons[k]}
      </TaskCell>
    ))}
    {children}
  </TaskbarWrap>
);

const TrayIcons = () => (
  <>
    <ChevronUp size={15} color="#eee" />
    <svg width="14" height="20" viewBox="0 0 14 20" fill="none" stroke="#fff"><rect x="4.5" y="0.5" width="5" height="12" rx="2.5" fill="#fff" /><path d="M2 9c0 6 10 6 10 0M7 15v4M4 19h6" /></svg>
    <svg width="16" height="18" viewBox="0 0 16 18" fill="none" stroke="#fff"><rect x="5.5" y="1.5" width="10" height="10" /><rect x="1.5" y="3.5" width="4" height="8" /><path d="M10 11.5v5M6 16.5h8" /></svg>
    <svg width="16" height="16" viewBox="0 0 16 16" fill="none" stroke="#ddd"><path d="M1.5 6v4h3l4 3V3l-4 3zM10.5 5.5c1 1.500 1 3.500 0 5M12.500 3.500c2 3 2 6 0 9" /></svg>
  </>
);

const QRCode = () => {
  const n = 25;
  const cells: React.ReactNode[] = [];
  const finder = (x: number, y: number) => {
    const inR = (ox: number, oy: number) => x >= ox && x < ox + 7 && y >= oy && y < oy + 7;
    for (const [ox, oy] of [[0, 0], [18, 0], [0, 18]]) {
      if (inR(ox, oy)) {
        const a = x - ox, b = y - oy;
        return a === 0 || a === 6 || b === 0 || b === 6 || (a >= 2 && a <= 4 && b >= 2 && b <= 4) ? 1 : 0;
      }
      if (x >= ox - 1 && x <= ox + 7 && y >= oy - 1 && y <= oy + 7) return 0;
    }
    return -1;
  };
  for (let y = 0; y < n; y++) {
    for (let x = 0; x < n; x++) {
      const f = finder(x, y);
      const v = f >= 0 ? f : (Math.sin(x * 12.9898 + y * 78.233) * 43758.5453) % 1;
      const on = f >= 0 ? f === 1 : Math.abs(v as number) > 0.42;
      if (on) cells.push(<rect key={`${x}-${y}`} x={x} y={y} width="1.02" height="1.02" />);
    }
  }
  return <svg width="62" height="62" viewBox="0 0 25 25" fill="#1a6f94" preserveAspectRatio="none">{cells}</svg>;
};

const tabIcons: Record<string, React.ReactNode> = {
  t: <svg width="16" height="16" viewBox="0 0 16 16"><circle cx="8" cy="8" r="8" fill="#1c8ee8" /><circle cx="8" cy="8" r="6" fill="#fff" /><text x="8" y="12" fontSize="11" fontWeight="700" fontFamily="Liberation Sans" textAnchor="middle" fill="#1c8ee8">t</text></svg>,
  gov: <svg width="16" height="16" viewBox="0 0 16 16"><path d="M8 1l7 7-7 7-7-7z" fill="#f3c411" /><circle cx="7.500" cy="8" r="4.2" fill="#1a4d9c" /><path d="M3.500 7c3-1 6 0 8 2" stroke="#fff" fill="none" /></svg>,
  sefip: <svg width="16" height="18" viewBox="0 0 16 18"><path d="M1 1c5 1 5 5 7 6 2-1 2-5 7-6-1 5-5 6-5 8s4 3 5 8c-5-1-5-5-7-6-2 1-2 5-7 6 1-5 5-6 5-8S2 6 1 1z" fill="#2584e8" /></svg>,
  yt: <svg width="16" height="14" viewBox="0 0 16 14"><rect width="16" height="14" rx="3.500" fill="#e21212" /><path d="M6 4l5 3-5 3z" fill="#fff" /></svg>,
  calc: <svg width="15" height="16" viewBox="0 0 15 16" fill="#fff"><rect width="15" height="16" rx="1" fill="#3a5fa8" /><rect x="1" y="1" width="6" height="6.500" fill="#52a0c4" /><rect x="8" y="1" width="6" height="6.500" fill="#a848b8" /><rect x="1" y="8.500" width="6" height="6.500" fill="#62a848" /><rect x="8" y="8.500" width="6" height="6.500" fill="#e8a838" /><path d="M2.500 4h3M3 11l2.500 2.500M5.500 11L3 13.500M9.500 4h3M9.500 11h3M9.500 13h3" stroke="#fff" /></svg>,
  gmail: <svg width="16" height="14" viewBox="0 0 16 14"><path d="M0 3l8 6 8-6v11h-3V6.500L8 10 3 6.500V14H0z" fill="#e43e2b" /><path d="M0 3V14h3V6.500z" fill="#3b78e7" /><path d="M16 3v11h-3V6.500z" fill="#2a9d4f" /><path d="M13 1l3 2-3 3.500z" fill="#f8bd0a" /></svg>,
  nela: <svg width="18" height="18" viewBox="0 0 18 18"><circle cx="8" cy="8" r="8" fill="#3b7fcf" /><circle cx="8" cy="8" r="4.500" fill="#fff" /><circle cx="11" cy="12" r="5.500" fill="#d61f1f" /><text x="11" y="15.500" fontSize="9" fontWeight="700" fontFamily="Liberation Sans" textAnchor="middle" fill="#fff">1</text></svg>,
  beauty: <svg width="16" height="14" viewBox="0 0 16 14"><g fill="#d09020"><rect x="1" y="11" width="2" height="2" /><rect x="4" y="8" width="2" height="2" fill="#3aa0a8" /><rect x="4" y="11" width="2" height="2" fill="#3aa0a8" /><rect x="7" y="5" width="2" height="2" fill="#7a4ab8" /><rect x="7" y="8" width="2" height="2" fill="#7a4ab8" /><rect x="7" y="11" width="2" height="2" fill="#7a4ab8" /><rect x="10" y="2" width="2" height="2" fill="#40a040" /><rect x="10" y="5" width="2" height="2" fill="#40a040" /><rect x="10" y="8" width="2" height="2" fill="#e04040" /><rect x="10" y="11" width="2" height="2" fill="#e04040" /><rect x="13" y="5" width="2" height="2" fill="#e8b020" /><rect x="13" y="11" width="2" height="2" fill="#2a80d0" /></g></svg>,
  como: <svg width="16" height="16" viewBox="0 0 16 16"><rect width="16" height="16" fill="#4a4a4a" /><path d="M0 11C3 5 8 2 16 1V0H0z" fill="#f07d1a" /></svg>,
  ms: <svg width="16" height="16" viewBox="0 0 16 16"><rect width="7.500" height="7.500" fill="#f25022" /><rect x="8.500" width="7.500" height="7.500" fill="#7fba00" /><rect y="8.500" width="7.500" height="7.500" fill="#00a4ef" /><rect x="8.500" y="8.500" width="7.500" height="7.500" fill="#ffb900" /></svg>,
  teste: <svg width="16" height="16" viewBox="0 0 16 16"><path d="M8 0l8 8-8 8-8-8z" fill="#2684ff" /><path d="M8 4.500L11.500 8 8 11.500 4.500 8z" fill="#fff" /></svg>,
  drupal: <FaDrupal size={16} color="#1f6fa8" />,
  ce: <svg width="16" height="16" viewBox="0 0 16 16"><circle cx="8" cy="8" r="7.500" fill="#f7f7f7" stroke="#888" /><path d="M1 8h9" stroke="#666" strokeWidth="1.600" /><path d="M10 8h5" stroke="#84bd19" strokeWidth="1.600" /></svg>,
  artigo: <svg width="16" height="16" viewBox="0 0 16 16"><circle cx="8" cy="8" r="8" fill="#5b9e2f" /><path d="M8 8L3 2h10zM8 8l-5 6h10z" fill="#dce9c8" /><circle cx="8" cy="8" r="1.500" fill="#5b9e2f" /></svg>,
};

const tabs: [string, string][] = [
  ["Ponto J", "t"], ["Manual", "gov"], ["SEFIP -", "sefip"], ["(120) C", "yt"], ["Calcula", "calc"], ["Caixa d", "gmail"], ["Nela | J", "nela"],
  ["Beautif", "beauty"], ["Como f", "como"], ["Localiz", "ms"], ["Manual", "gov"], ["Teste A", "teste"], ["Qualid", "drupal"],
];

const menus: [string, string, string, number][] = [
  ["C", "o", "nfigurações", 99], ["", "C", "adastros Gerais", 110], ["C", "a", "dastros Específicos", 134], ["e", "S", "ocial", 59], ["", "B", "enefícios", 76],
  ["", "P", "rocessos", 74], ["Pro", "c", "essamentos", 108], ["", "R", "elatórios", 74], ["", "J", "anela", 54], ["", "A", "juda", 49],
];

const toolRow: [string, number?][] = [["door"], ["star"], ["search"], ["docs"], ["house"], ["personSync"], ["calc"], ["monitor"], ["|"], ["personAdd"], ["|"], ["worker", 32], ["|"], ["gearArrow"], ["gear15"], ["gear30"], ["gearBag"], ["gearDown"], ["|"], ["docMoney"]];

const gridRows = [
  ["01/06/2022 13:58:11", "01/06/2022 13:58:11"],
  ["01/06/2022 13:58:11", "01/06/2022 13:58:11"],
  ["01/06/2022 13:58:35", "01/06/2022 13:58:35"],
  ["01/06/2022 13:30:06", "01/06/2022 13:30:06"],
];

const sideLinks = ["Agile Software Testing", "As Especialistas", "Base de Teste de Software", "Blog do Ensinar", "Blog do Vizir", "Cem Kaner's Blog", "DFTestes", "Ensaios de Qualidade", "Falando em Teste e Qualidade de\nSoftware", "Felipe Knorr Kuhn", "Google Testing Blog"];

export default function App() {
  return (
    <Root>
      <Global />
      <LeftDesktop>
        <AppFrame>
          <TitleBar>
            <AppGlyph />
            <TitleText>FOLHA-Folha de Pagamento &lt;VIAFISRHATUEVE&gt;</TitleText>
            <CaptionButtons>
              <CaptionBtn><Cap kind="min" /></CaptionBtn>
              <CaptionBtn><Cap kind="res" /></CaptionBtn>
              <CaptionBtn><Cap kind="close" /></CaptionBtn>
            </CaptionButtons>
          </TitleBar>
          <MenuStrip>
            <MenuBand>
              <Grip $h={18} $m={7} />
              {menus.map(([a, u, b, w]) => <MenuItem key={a + u + b} $w={w}>{a}<u>{u}</u>{b}</MenuItem>)}
            </MenuBand>
          </MenuStrip>
          <ToolStrip>
            <ToolBand>
              <Grip $h={32} $m={3} />
              {toolRow.map(([t, w], i) =>
                t === "|" ? <ToolSep key={i} /> : <ToolBtn key={i} $w={w}><ToolIcon name={t} /></ToolBtn>
              )}
              <ToolSep />
              <Grip $h={32} $m={0} />
              <NewsLabel>Viasoft News:</NewsLabel>
              <NewsLink>Viasoft News</NewsLink>
            </ToolBand>
          </ToolStrip>
          <DarkBar>
            <DarkLabel>2 - BANCO BASE TESTE COMPLETE 2 2-2</DarkLabel>
            <SearchField>
              Pesquisa de rotinas...
              <svg width="16" height="17" viewBox="0 0 16 17" fill="none" stroke="#666" strokeWidth="1.1"><circle cx="6.500" cy="6.500" r="5.500" /><path d="M10.500 10.500l5 6" strokeWidth="1.600" /></svg>
            </SearchField>
            <DarkLabel>VIAFISRHATUEVE</DarkLabel>
          </DarkBar>
          <AppMain>
            <ViasoftMark>VIASOFT</ViasoftMark>
            <TalentMark><TalentWord>talent</TalentWord><TalentRh>RH</TalentRh></TalentMark>
            <FollowLabel>Siga-nos!</FollowLabel>
            <QrBox><QRCode /></QrBox>
            <Divider />
            <SocialRow>
              <SocialItem $m={20}><InstaTile><FaInstagram /></InstaTile>@viasoftoficial</SocialItem>
              <SocialItem $m={20}><FbTile><FaFacebookF /></FbTile>/ViasoftSoftwares</SocialItem>
              <SocialItem $m={0}><LiTile><FaLinkedinIn /></LiTile>/company/viasoft-softwares</SocialItem>
            </SocialRow>
          </AppMain>
        </AppFrame>
        <Taskbar activeFull appGhost={26} chromeGhost={17}>
          <Tray $gap={9} $pr={0}>
            <TrayIcons />
            <Clock>16:31<br />01/06/2022</Clock>
            <NotifySlot><svg width="16" height="18" viewBox="0 0 16 18" fill="none" stroke="#fff"><path d="M.5.5h15v13h-5l-2.500 3-2.500-3h-5z" /></svg></NotifySlot>
            <DesktopEdge />
          </Tray>
        </Taskbar>
        <MonitorWindow>
          <MonitorTitle>
            <AppGlyph />
            <MonitorTitleText>Monitoramento de Execução de Processos</MonitorTitleText>
            <CaptionButtons>
              <MonitorCaption><Cap kind="min" c="#888" /></MonitorCaption>
              <MonitorCaption><Cap kind="max" c="#888" /></MonitorCaption>
              <MonitorCaption><Cap kind="close" c="#888" /></MonitorCaption>
            </CaptionButtons>
          </MonitorTitle>
          <GridArea>
            <GridRow $h={19}>
              <GridIndicator $bg="#fff"><svg width="8" height="10" viewBox="0 0 8 10" fill="#333"><path d="M0 1h1.500v1H0zM0 4h1.500v1H0zM0 7h1.500v1H0zM2.500 1H8v1H2.500zM2.500 4H8v1H2.500zM2.500 7H8v1H2.500zM0 9h8v.6H0z" /></svg></GridIndicator>
              <GridCell $soft>Rotina</GridCell>
              <GridCell $soft>Status</GridCell>
              <GridCell>Início Execução</GridCell>
              <GridCell>Final Execução</GridCell>
              <GridCell>Pr</GridCell>
            </GridRow>
            {gridRows.map((r, i) => (
              <GridRow key={i} $h={19}>
                <GridIndicator $bg="#f0f0f0">{i === 0 && <svg width="7" height="10" viewBox="0 0 7 10" fill="#111"><path d="M1 0l6 5-6 5z" /></svg>}</GridIndicator>
                <GridCell $bg={i === 0 ? "#f0f0f0" : "#fff0ee"}>Envia Situação para o Ponto Job</GridCell>
                <GridCell $bg="#fff0ee">Completo com Erros</GridCell>
                <GridCell $bg="#fff0ee">{r[0]}</GridCell>
                <GridCell $bg="#fff0ee">{r[1]}</GridCell>
                <PrCell>1</PrCell>
              </GridRow>
            ))}
          </GridArea>
          <HScroll>
            <ChevronLeft size={14} strokeWidth={2} />
            <HThumb />
            <ChevronRight size={14} strokeWidth={2} />
          </HScroll>
        </MonitorWindow>
      </LeftDesktop>

      <RightDesktop>
        <ChromeWindow>
          <TabStrip>
            {tabs.map(([t, ic], i) => (
              <Tab key={i} $sep>
                <Favicon>{tabIcons[ic]}</Favicon>
                <TabTitle $w={32}>{t}</TabTitle>
              </Tab>
            ))}
            <Tab $active>
              <Favicon>{tabIcons.ce}</Favicon>
              <TabTitle $w={14}>Ce</TabTitle>
              <TabClose><X size={14} strokeWidth={2.6} /></TabClose>
            </Tab>
            <Tab $sep>
              <Favicon>{tabIcons.artigo}</Favicon>
              <TabTitle $w={32}>Artigo</TabTitle>
            </Tab>
            <NewTab><Plus size={19} strokeWidth={2.2} /></NewTab>
            <ChromeCaption>
              <ChromeCapBtn><ChevronDown size={17} strokeWidth={1.4} /></ChromeCapBtn>
              <ChromeCapBtn><Cap kind="min" c="#222" /></ChromeCapBtn>
              <ChromeCapBtn><Cap kind="res" c="#222" /></ChromeCapBtn>
              <ChromeCapBtn><Cap kind="close" c="#222" /></ChromeCapBtn>
            </ChromeCaption>
          </TabStrip>
          <ChromeToolbar>
            <NavBtn $c="#5f6368"><ArrowLeft size={19} /></NavBtn>
            <NavBtn $c="#bcc0c4"><ArrowRight size={19} /></NavBtn>
            <NavBtn $c="#5f6368"><RotateCw size={17} /></NavBtn>
            <Omnibox>
              <Lock size={13} color="#5f6368" fill="#5f6368" />
              <UrlText><UrlHost>qualidadebr.wordpress.com</UrlHost>/2008/08/10/certificacao-brasileira-de-teste-de-software-cbts/</UrlText>
              <OmniRight>
                <svg width="16" height="16" viewBox="0 0 16 16" fill="none" stroke="#5f6368" strokeWidth="1.200"><path d="M1 7v8h11v-4M15 5L9.500 1v2.500C5 3.500 3 7 3 11c1.500-3 3.500-4 6.500-4v2.500z" /></svg>
                <Star size={16} strokeWidth={1.6} />
              </OmniRight>
            </Omnibox>
            <PuzzleSlot><FaPuzzlePiece size={16} /></PuzzleSlot>
          </ChromeToolbar>
          <Viewport>
            <PageBody>
              <GreenRail>
                <RailTab><Plus size={17} strokeWidth={3.4} /></RailTab>
              </GreenRail>
              <Article>
                <Para>maior aceitação no mercado de TI.</Para>
                <Heading>Quais os benefícios para empresa ter um profissional certificado?</Heading>
                <Para>São através das certificações, que os profissionais podem atestar seu nível de domínio e co-<br />nhecimento de seu serviço, assim como as empresas podem demonstrar que possuem um<br />quadro capacitado para atender as demandas com qualidade e profissionalismo. Resultando<br />para a empresa na melhoria de seus processos e ampliação da qualidade e produtividade de<br />seus serviços.</Para>
                <Heading>Quantos profissionais atualmente possuem a CBTS?</Heading>
                <Para>São atualmente 201 profissionais certificados na CBTS em todo o Brasil.</Para>
                <Heading>Quem é o responsável pela CBTS?</Heading>
                <Para>A <a>ALATS</a> (Associação Latino-Americana de Testes de Software)&nbsp; é a responsável pela CBTS.<br />Fundada em 2002, com a missão de tornar-se uma instituição que representasse de forma<br />mais isenta e imparcial possível, todas as empresas e profissionais que possuam vínculo e<br />interesse com os rumos do mercado de testes e qualidade de software no Brasil. Desde sua<br />fundação, um dos principais objetivos da ALATS era estabelecer uma certificação que avali-<br />asse o nível de conhecimento dos profissionais sobre as disciplinas de testes e qualidade de<br />software, forçando um processo de amadurecimento e profissionalização da área de testes.<br />Objetivo esse que deu origem a CBTS.</Para>
              </Article>
              <Side>
                <SideTweet>
                  <Bullet $m={12} /> Retomando! <Muted>wp.me/pgJ0z-1oz</Muted><br /><Muted>9 years ago</Muted>
                </SideTweet>
                <SideTweet>
                  <Bullet $m={12} /> na iTunes U tem um curso de<br />Teste de Software gratuito lecionado<br />pelo Cem Kaner em 2008, confira em:<br /><Muted $c="#999">bit.ly/software-testi...</Muted> <Muted>9 years ago</Muted>
                </SideTweet>
                <SideHeading>Links</SideHeading>
                <LinkList>
                  {sideLinks.map(l => <LinkItem key={l}><Bullet $m={9} />{l}</LinkItem>)}
                </LinkList>
              </Side>
              <ScrollTrack><ScrollThumb /></ScrollTrack>
            </PageBody>
            <AdFooter>
              <AdLabel>Anúncios</AdLabel>
              <AdBox>
                <AdPurple $l={0} $t={0} $w={247} $h={90} $c="#7f55b1" $clip="polygon(0 0, 238px 0, 247px 100%, 0 100%)" />
                <AdPurple $l={43} $t={32} $w={48} $h={20} $r="4px 4px 0 0" $c="#fff" />
                <AdPurple $l={105} $t={84} $w={142} $h={8} $c="#f5f5f5" $clip="polygon(30px 0, 100% 0, 100% 100%, 0 100%)" />
                <AdPurple $l={539} $t={0} $w={88} $h={22} $r="0 0 50px 50px" $c="#ff9639" />
                <AdPurple $l={324} $t={29} $w={13} $h={12} $c="#35d3a0" $clip="polygon(70% 0, 100% 100%, 0 100%)" />
                <AdPurple $l={282} $t={84} $w={52} $h={6} $c="#35d3a0" />
                <AdPurple $l={596} $t={30} $w={90} $h={12} $c="#7f55b1" />
                <AdPurple $l={637} $t={84} $w={84} $h={6} $c="#18b5f2" />
                <AdHeadline>How to start selling</AdHeadline>
              </AdBox>
              <AdReport>DENUNCIAR ESTE ANÚNCIO</AdReport>
              <DownTri />
            </AdFooter>
            <CookieBar>
              <CookieText>
                Privacidade e cookies: Esse site utiliza cookies. Ao continuar a usar este site, você concorda com seu uso.<br />
                Para saber mais, inclusive sobre como controlar os cookies, consulte aqui: <a>Política de cookies</a>
              </CookieText>
              <CookieBtn>Fechar e aceitar</CookieBtn>
            </CookieBar>
            <StatusBubble>www.alats.org.br</StatusBubble>
            <CloseCircle>
              <svg width="24" height="24" viewBox="0 0 24 24" fill="none" stroke="#777" strokeWidth="1.300"><circle cx="12" cy="12" r="11" /><path d="M6 6l12 12M18 6L6 18" /></svg>
            </CloseCircle>
            <HandCursor>
              <svg width="18" height="24" viewBox="0 0 18 24" fill="#fff" stroke="#222" strokeWidth="1"><path d="M5.500 1.500c1-1 2.500-1 3 .5v7l1-.2c.8 0 1.500.3 1.700 1 .6-.3 1.600-.2 2 .6.800-.3 2 .2 2.300 1.400.4 2 .2 5-.5 7l-.8 3.500H6L3 16.500 1 13c-.8-1.500.8-2.500 2-1.500l2 2z" /><path d="M8.500 12v4M11 12v4M13.500 12v4" strokeWidth=".7" /></svg>
            </HandCursor>
          </Viewport>
        </ChromeWindow>
        <Taskbar activeFull={false} appGhost={26} chromeGhost={15}>
          <Tray $gap={0} $pr={7}>
            <Clock>16:31<br />01/06/2022</Clock>
          </Tray>
        </Taskbar>
      </RightDesktop>

      <PlaybackBar>
        <BadgeTile><BadgeGear size={24} /></BadgeTile>
        <BarDivider />
        <PauseIcon />
        <StopIcon />
      </PlaybackBar>
      <PlaybackTip>
        <TipTitle>Playback</TipTitle>
        RH | Processa 13º Salário - 1ª Parcela
      </PlaybackTip>
      <MouseTip />
    </Root>
  );
}
